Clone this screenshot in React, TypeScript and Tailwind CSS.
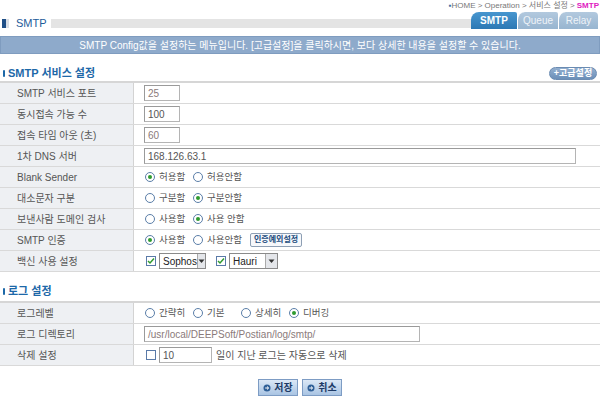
import React from "react";

const font = "font-['Liberation_Sans','Noto_Sans_CJK_KR',sans-serif]";

function Radio({ checked, label }: { checked?: boolean; label: string }) {
  return (
    <span className="flex items-center gap-[4px] w-[48px]">
      <span className="w-[10px] h-[10px] rounded-full border border-[#5a7ea8] bg-white flex items-center justify-center shrink-0">
        {checked && <span className="w-[4px] h-[4px] rounded-full bg-[#2f9b2f]" />}
      </span>
      <span className="text-[9.5px] whitespace-nowrap">{label}</span>
    </span>
  );
}

function Check({ checked }: { checked?: boolean }) {
  return (
    <span className="w-[10px] h-[10px] border border-[#5a7aa8] bg-white flex items-center justify-center shrink-0">
      {checked && (
        <svg width="8" height="8" viewBox="0 0 8 8">
          <path d="M1 4 L3 6 L7 1.5" stroke="#2f9b2f" strokeWidth="1.5" fill="none" />
        </svg>
      )}
    </span>
  );
}

function Input({ value, w, gray }: { value: string; w: string; gray?: boolean }) {
  return (
    <span
      className={`${w} h-[16px] border border-[#b4b4b4] border-t-[#9a9a9a] border-l-[#9a9a9a] bg-white flex items-center pl-[3px] text-[10px] ${gray ? "text-[#8a7a7a]" : "text-[#555]"}`}
    >
      {value}
    </span>
  );
}

function Select({ value, w }: { value: string; w: string }) {
  return (
    <span className={`${w} h-[16px] border border-[#8a8a8a] bg-white flex items-center text-[10px] text-[#222]`}>
      <span className="flex-1 pl-[3px]">{value}</span>
      <span className="w-[12px] h-[14px] bg-[#e4e6ea] border-l border-[#aaa] flex items-center justify-center">
        <svg width="7" height="5" viewBox="0 0 7 5">
          <path d="M0.5 0.5 L3.5 4 L6.5 0.5 Z" fill="#333" />
        </svg>
      </span>
    </span>
  );
}

function Row({ label, children }: { label: string; children: React.ReactNode }) {
  return (
    <div className="flex h-[21px] border-b border-[#d9d9d9]">
      <div className="w-[133px] bg-[#eef0f3] pl-[17px] flex items-center text-[#555]">{label}</div>
      <div className="flex-1 border-l border-[#d3d3d3] pl-[10px] flex items-center">{children}</div>
    </div>
  );
}

function Heading({ text }: { text: string }) {
  return (
    <div className="flex items-center gap-[3px] pl-[3px] h-[14px] text-[#1d68a8] font-bold text-[11px]">
      <span className="w-[2px] h-[7px] rounded-full bg-[#1d68a8]" />
      <span>{text}</span>
    </div>
  );
}

function ActionButton({ label }: { label: string }) {
  return (
    <button className="h-[17px] w-[40px] border border-[#7d9cc4] bg-gradient-to-b from-[#dbe8f6] to-[#a9c4e3] flex items-center justify-center gap-[3px] text-[10px] font-bold text-[#1d3a66]">
      <svg width="8" height="8" viewBox="0 0 8 8">
        <circle cx="4" cy="4" r="3.5" fill="#2e5f97" />
        <path d="M2.2 4 H5.5 M4 2.5 L5.6 4 L4 5.5" stroke="#fff" strokeWidth="1" fill="none" />
      </svg>
      {label}
    </button>
  );
}

export default function App() {
  return (
    <div className={`w-[600px] h-[400px] bg-white text-[10px] text-[#555] ${font}`}>
      {/* breadcrumb */}
      <div className="h-[11px] flex justify-end items-center pr-[1px] text-[8px] text-[#777] leading-none">
        <span className="text-[#3a6ea5]">▪</span>
        <span>HOME &gt; Operation &gt; 서비스 설정 &gt; </span>
        <span className="text-[#e020c0] font-bold ml-[2px]">SMTP</span>
      </div>

      {/* title + tabs */}
      <div className="h-[18px] flex items-end">
        <div className="flex items-center h-[10px] mb-[1px] flex-1">
          <span className="w-[4px] h-[9px] ml-[2px] bg-[#1f4f86]" />
          <span className="w-[3px] h-[9px] bg-[#d8dde4] mr-[7px]" />
          <span className="text-[#1d5b9a] text-[11px] mr-[4px]">SMTP</span>
          <span className="flex-1 h-[9px] bg-[#e4e4e4]" />
        </div>
        <div className="flex items-end h-[18px] ml-[-38px] pr-[2px]">
          <div className="w-[46px] h-[17px] rounded-tl-[8px] rounded-tr-[2px] bg-gradient-to-b from-[#4796cf] to-[#2c78b4] text-white font-bold text-[10px] flex items-center justify-center">
            SMTP
          </div>
          <div className="w-[41px] h-[17px] rounded-tl-[8px] rounded-tr-[2px] bg-gradient-to-b from-[#b2c9de] to-[#98b5d0] text-[#eef3f8] text-[10px] flex items-center justify-center border-l border-[#fff]">
            Queue
          </div>
          <div className="w-[40px] h-[17px] rounded-tl-[8px] rounded-tr-[4px] bg-gradient-to-b from-[#b2c9de] to-[#98b5d0] text-[#eef3f8] text-[10px] flex items-center justify-center border-l border-[#fff]">
            Relay
          </div>
        </div>
      </div>

      {/* info bar */}
      <div className="mt-[7px] h-[18px] bg-[#8eaacb] border border-[#7f9cbf] flex items-center justify-center text-white text-[10px]">
        SMTP Config값을 설정하는 메뉴입니다. [고급설정]을 클릭하시면, 보다 상세한 내용을 설정할 수 있습니다.
      </div>

      {/* SMTP section */}
      <div className="mt-[12px] flex items-center justify-between pr-[3px]">
        <Heading text="SMTP 서비스 설정" />
        <button className="h-[13px] w-[48px] rounded-full bg-gradient-to-b from-[#93afcf] to-[#6c8fb8] border border-[#6a8bb2] text-white font-bold text-[9px] flex items-center justify-center leading-none">
          +고급설정
        </button>
      </div>
      <div className="mt-[1px] border-t-2 border-[#d6d6d6]">
        <Row label="SMTP 서비스 포트">
          <Input value="25" w="w-[36px]" gray />
        </Row>
        <Row label="동시접속 가능 수">
          <Input value="100" w="w-[36px]" />
        </Row>
        <Row label="접속 타임 아웃 (초)">
          <Input value="60" w="w-[36px]" gray />
        </Row>
        <Row label="1차 DNS 서버">
          <Input value="168.126.63.1" w="w-[432px]" />
        </Row>
        <Row label="Blank Sender">
          <span className="pl-[1px] flex">
            <Radio checked label="허용함" />
            <Radio label="허용안함" />
          </span>
        </Row>
        <Row label="대소문자 구분">
          <span className="pl-[1px] flex">
            <Radio label="구분함" />
            <Radio checked label="구분안함" />
          </span>
        </Row>
        <Row label="보낸사람 도메인 검사">
          <span className="pl-[1px] flex">
            <Radio label="사용함" />
            <Radio checked label="사용 안함" />
          </span>
        </Row>
        <Row label="SMTP 인증">
          <span className="pl-[1px] flex items-center">
            <Radio checked label="사용함" />
            <Radio label="사용안함" />
            <span className="h-[14px] px-[3px] border border-[#8e9fb4] rounded-[2px] bg-[#f6f8fb] text-[8px] font-bold text-[#234d7e] flex items-center ml-[9px]">
              인증예외설정
            </span>
          </span>
        </Row>
        <Row label="백신 사용 설정">
          <span className="pl-[2px] flex items-center gap-[3px]">
            <Check checked />
            <Select value="Sophos" w="w-[47px]" />
            <span className="w-[4px]" />
            <Check checked />
            <Select value="Hauri" w="w-[49px]" />
          </span>
        </Row>
      </div>

      {/* log section */}
      <div className="mt-[12px]">
        <Heading text="로그 설정" />
      </div>
      <div className="mt-[3px] border-t-2 border-[#d6d6d6]">
        <Row label="로그레벨">
          <span className="pl-[1px] flex">
            <Radio label="간략히" />
            <Radio label="기본" />
            <Radio label="상세히" />
            <Radio checked label="디버깅" />
          </span>
        </Row>
        <Row label="로그 디렉토리">
          <Input value="/usr/local/DEEPSoft/Postian/log/smtp/" w="w-[276px]" gray />
        </Row>
        <Row label="삭제 설정">
          <span className="pl-[2px] flex items-center gap-[3px]">
            <Check />
            <Input value="10" w="w-[53px]" />
            <span className="ml-[1px]">일이 지난 로그는 자동으로 삭제</span>
          </span>
        </Row>
      </div>

      {/* buttons */}
      <div className="mt-[13px] flex justify-center gap-[4px]">
        <ActionButton label="저장" />
        <ActionButton label="취소" />
      </div>
    </div>
  );
}
